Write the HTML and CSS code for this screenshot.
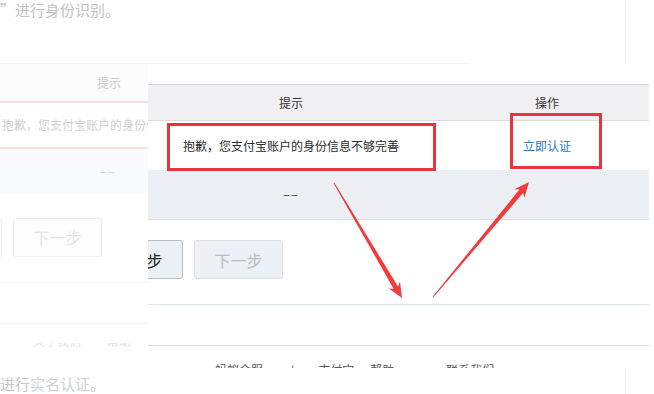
FILE: index.html
```html
<!DOCTYPE html>
<html lang="zh-CN">
<head>
  <meta charset="UTF-8">
  <meta name="viewport" content="width=device-width, initial-scale=1.0">
  <title>实名认证 - 提示</title>
  <link rel="stylesheet" href="styles.css">
</head>
<body>
  <div class="screen">
    <!-- 背景页面（淡化） -->
    <div class="main">
      <p class="lead">”进行身份识别。</p>
      <div class="ghost-table">
        <div class="ghost-head">提示</div>
        <div class="ghost-row warn">抱歉，您支付宝账户的身份信息不够完善</div>
        <div class="ghost-row alt">−−</div>
      </div>
      <div class="ghost-actions">
        <span class="ghost-btn">上一步</span>
        <span class="ghost-btn">下一步</span>
      </div>
      <div class="ghost-rule"></div>
      <div class="ghost-rule far"></div>
      <div class="ghost-links">
        <span class="cut">关于我们</span>
        <span class="cut">帮助</span>
      </div>
      <p class="ghost-foot">进行<a>实名认证</a>。</p>
    </div>
    <div class="aside"></div>

    <!-- 放大截图 -->
    <div class="zoom">
      <div class="grid head">
        <div class="cell">提示</div>
        <div class="cell">操作</div>
      </div>
      <div class="grid row">
        <div class="cell">抱歉，您支付宝账户的身份信息不够完善</div>
        <div class="cell"><a class="link">立即认证</a></div>
      </div>
      <div class="grid row alt">
        <div class="cell dash">−−</div>
        <div class="cell"></div>
      </div>
      <div class="actions">
        <button class="btn prev">上一步</button>
        <button class="btn next" disabled>下一步</button>
      </div>
      <div class="rule"></div>
      <div class="rule grey"></div>
      <div class="footer">
        <span class="cut w1">蚂蚁金服</span>
        <span class="cut w2">|</span>
        <span class="cut w3">支付宝</span>
        <span class="cut w4">帮助</span>
        <span class="cut w5">联系我们</span>
      </div>
    </div>

    <!-- 标注 -->
    <div class="mark mark-tip"></div>
    <div class="mark mark-act"></div>
    <svg class="arrows" width="654" height="394" viewBox="0 0 654 394">
      <polygon points="333.6,183.3 393.7,289 388.8,288.4 402,298 400,281.8 398,286.4 334.4,182.7" />
      <polygon points="432.6,296.7 519.4,189.6 514.4,189.3 529,182 524.4,197.7 523.2,192.8 433.4,297.3" />
    </svg>
  </div>
</body>
</html>
```

FILE: styles.css
```css
html { overflow: hidden; }
body {
  margin: 0;
  padding: 0;
  background-color: #ffffff;
  color: #333333;
  font-family: "Noto Sans CJK SC", "Liberation Sans", sans-serif;
}

.screen {
  position: relative;
  display: flex;
  width: 654px;
  height: 394px;
  overflow: hidden;
}
.main { width: 625px; }
.aside { flex: 1; border-left: 1px solid #f3f3f3; }

/* 背景页面 */
.lead {
  margin: 0;
  height: 22px;
  font-size: 15px;
  line-height: 20px;
  color: #c2c2c2;
}
.ghost-table { margin-top: 41px; width: 470px; border-top: 1px solid #f2f2f2; }
.ghost-head {
  height: 37px;
  line-height: 37px;
  padding-left: 97px;
  font-size: 12px;
  color: #cbcbcb;
  background-color: #fcfcfd;
}
.ghost-row { font-size: 12px; color: #cfcfcf; white-space: nowrap; overflow: hidden; }
.ghost-row.warn {
  height: 44px;
  line-height: 44px;
  padding-left: 2px;
  border-top: 2px solid #fbdcdf;
  border-bottom: 2px solid #fbdcdf;
}
.ghost-row.alt {
  height: 45px;
  line-height: 45px;
  padding-left: 100px;
  background-color: #fafbfc;
  color: #d4d4d4;
  letter-spacing: 1px;
}
.ghost-actions { display: flex; gap: 11px; margin-top: 24px; }
.ghost-btn {
  box-sizing: border-box;
  width: 89px;
  height: 39px;
  line-height: 37px;
  text-align: center;
  font-size: 16px;
  color: #e3e6e9;
  border: 1px solid #eef0f3;
  border-radius: 2px;
  background-color: #fdfdfe;
}
.ghost-btn:first-child { margin-left: -87px; }
.ghost-rule { margin-top: 25px; border-top: 1px solid #f5f5f5; }
.ghost-rule.far { margin-top: 40px; }
.ghost-links { display: flex; gap: 26px; height: 4px; margin-top: 19px; padding-left: 33px; overflow: hidden; }
.ghost-links .cut { font-size: 12px; line-height: 12px; margin-top: -8px; color: #e2e2e2; }
.ghost-foot {
  margin: 27px 0 0;
  font-size: 15px;
  line-height: 20px;
  color: #c6c6c6;
}
.ghost-foot a { color: #c9d2db; }

/* 放大截图 */
.zoom {
  position: absolute;
  left: 148px;
  top: 64px;
  box-sizing: border-box;
  width: 501px;
  height: 304px;
  padding-top: 20px;
  overflow: hidden;
  background-color: #ffffff;
}
.grid { display: grid; grid-template-columns: 286px 226px; font-size: 12px; }
.cell { text-align: center; white-space: nowrap; }
.head {
  height: 35px;
  line-height: 35px;
  color: #333333;
  background-color: #f1f1f4;
  border-top: 1px solid #d6d6da;
  border-bottom: 1px solid #dcdce0;
}
.row { height: 49px; line-height: 49px; color: #2a2a2a; }
.row.alt { background-color: #ecf0f4; border-bottom: 1px solid #d5dbe1; }
.dash { letter-spacing: 1px; color: #444444; }
.link { color: #2b7bc4; cursor: pointer; }

.actions { display: flex; gap: 11px; margin-top: 20px; }
.btn {
  box-sizing: border-box;
  width: 89px;
  height: 39px;
  padding: 0;
  font-family: inherit;
  font-size: 16px;
  border-radius: 3px;
  background-color: #edf1f5;
}
.btn.prev { margin-left: -54px; color: #222222; border: 1px solid #b9bdc3; }
.btn.next { color: #b8bdc3; border: 1px solid #dde2e8; }

.rule { margin-top: 25px; border-top: 1px solid #dde5ec; }
.rule.grey { margin-top: 40px; border-top-color: #d9d9d9; }
.footer { display: flex; height: 4px; margin-top: 18px; padding-left: 67px; overflow: hidden; }
.footer .cut { font-size: 12px; line-height: 12px; color: #555555; }
.footer .w2 { margin-left: 28px; }
.footer .w3 { margin-left: 24px; }
.footer .w4 { margin-left: 16px; }
.footer .w5 { margin-left: 52px; }

/* 标注 */
.mark {
  position: absolute;
  box-sizing: border-box;
  border: 3px solid #e6353b;
}
.mark-tip { left: 167px; top: 123px; width: 269px; height: 48px; }
.mark-act { left: 510px; top: 113px; width: 92px; height: 56px; }
.arrows { position: absolute; left: 0; top: 0; }
.arrows polygon { fill: #f23b3b; }
```
